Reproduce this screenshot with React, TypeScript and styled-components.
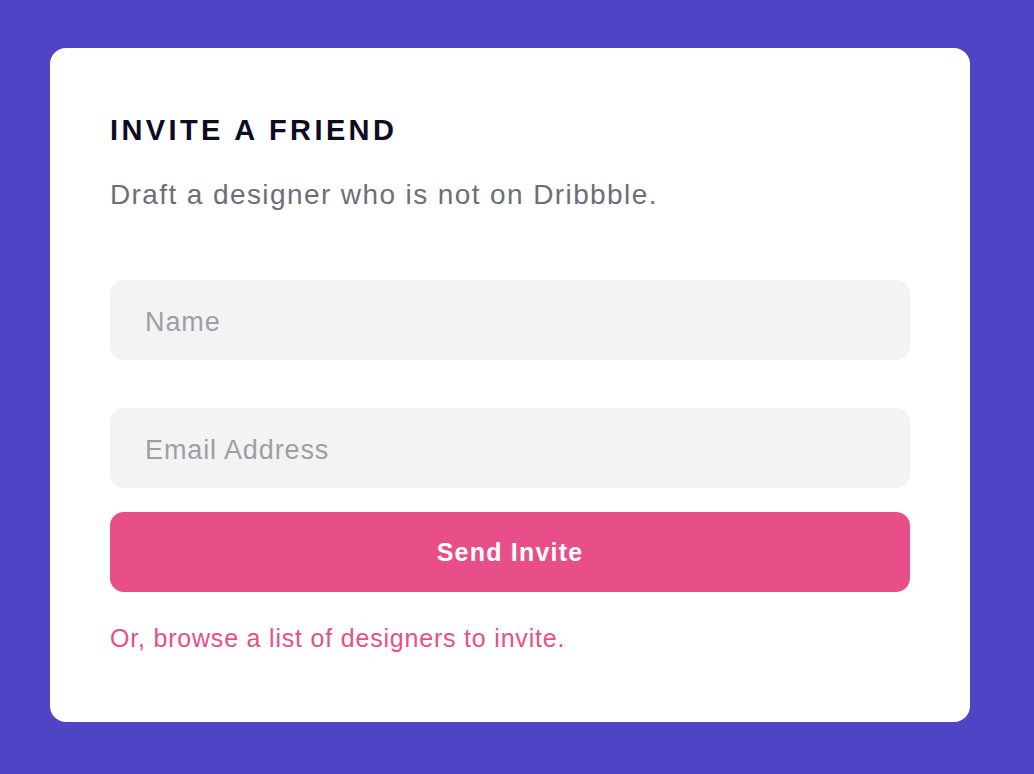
import styled, { createGlobalStyle } from 'styled-components';

const Purple = '#4f44c6';
const Pink = '#e84f88';
const Ink = '#0d0c22';
const Gray = '#6e6d7a';
const Placeholder = '#9e9ea7';
const FieldBg = '#f3f3f4';
const FontStack = '"Liberation Sans", Arial, Helvetica, sans-serif';

const GlobalStyle = createGlobalStyle`
	html, body {
		margin: 0;
		padding: 0;
		background-color: ${Purple};
	}
	* {
		box-sizing: border-box;
	}
`;

export default function App() {
	return (
		<>
			<GlobalStyle />
			<Page>
				<InviteCard>
					<Title>INVITE A FRIEND</Title>
					<Subtitle>Draft a designer who is not on Dribbble.</Subtitle>
					<InviteForm onSubmit={(e) => e.preventDefault()}>
						<Field type='text' placeholder='Name' $gapAfter='48px' />
						<Field type='email' placeholder='Email Address' $gapAfter='24px' />
						<SendButton type='submit'>Send Invite</SendButton>
					</InviteForm>
					<BrowseLink href='#'>Or, browse a list of designers to invite.</BrowseLink>
				</InviteCard>
			</Page>
		</>
	);
}

const Page = styled.div`
	width: 1034px;
	height: 774px;
	padding: 48px 0 0 50px;
	background-color: ${Purple};
	font-family: ${FontStack};
`;

const InviteCard = styled.section`
	display: flex;
	flex-direction: column;
	width: 920px;
	height: 674px;
	padding: 64px 60px 0 60px;
	background-color: #ffffff;
	border-radius: 16px;
`;

const Title = styled.h1`
	margin: 0;
	font-size: 29px;
	line-height: 36px;
	font-weight: 700;
	letter-spacing: 3.4px;
	color: ${Ink};
`;

const Subtitle = styled.p`
	margin: 29px 0 0 0;
	font-size: 28px;
	line-height: 36px;
	letter-spacing: 1.4px;
	color: ${Gray};
`;

const InviteForm = styled.form`
	display: flex;
	flex-direction: column;
	margin-top: 67px;
`;

const Field = styled.input<{ $gapAfter: string }>`
	width: 100%;
	height: 80px;
	margin-bottom: ${(props) => props.$gapAfter};
	padding: 4px 35px 0 35px;
	border: none;
	outline: none;
	border-radius: 14px;
	background-color: ${FieldBg};
	font-family: ${FontStack};
	font-size: 27px;
	letter-spacing: 0.9px;
	color: ${Ink};

	&::placeholder {
		color: ${Placeholder};
	}
`;

const SendButton = styled.button`
	width: 100%;
	height: 80px;
	border: none;
	border-radius: 14px;
	background-color: ${Pink};
	color: #ffffff;
	font-family: ${FontStack};
	font-size: 25px;
	font-weight: 700;
	letter-spacing: 1.2px;
	cursor: pointer;
`;

const BrowseLink = styled.a`
	margin-top: 30px;
	font-size: 25px;
	line-height: 32px;
	letter-spacing: 0.8px;
	color: ${Pink};
	text-decoration: none;
`;
